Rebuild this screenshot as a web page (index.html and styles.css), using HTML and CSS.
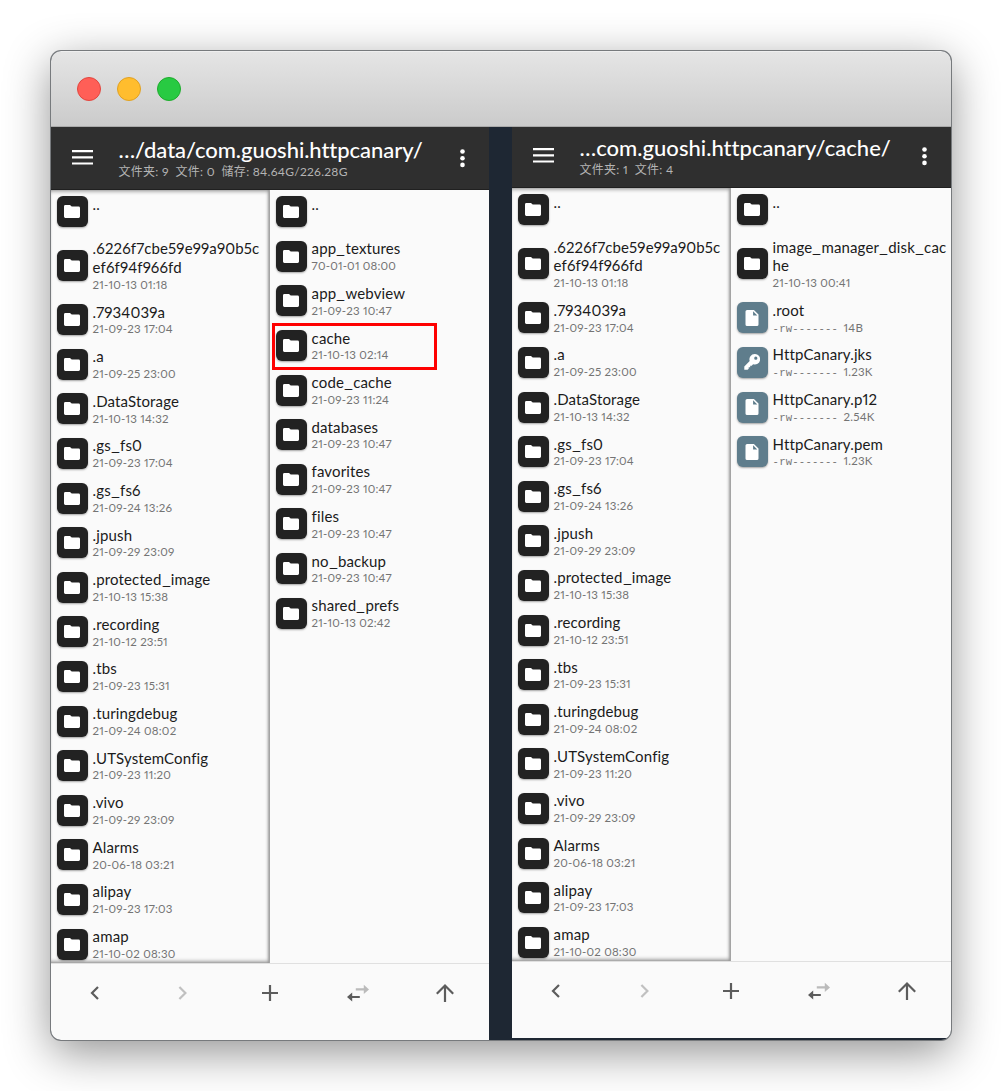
FILE: index.html
```
<!DOCTYPE html>
<html lang="zh-CN">
<head>
<meta charset="utf-8">
<title>MT File Manager</title>
<link rel="stylesheet" href="styles.css">
</head>
<body>
<svg class="defs" aria-hidden="true">
  <symbol id="folder" viewBox="0 0 16 13"><path d="M1.4 0H6l1.7 1.6h6.9A1.4 1.4 0 0 1 16 3v8.6a1.4 1.4 0 0 1-1.4 1.4H1.4A1.4 1.4 0 0 1 0 11.6V1.4A1.4 1.4 0 0 1 1.4 0Z"/></symbol>
  <symbol id="file" viewBox="0 0 13 16"><path fill-rule="evenodd" d="M1.6 0H8.4L13 4.6v9.8a1.6 1.6 0 0 1-1.6 1.6H1.6A1.6 1.6 0 0 1 0 14.4V1.6A1.6 1.6 0 0 1 1.6 0ZM7.6 1.2v4.2h4.2Z"/></symbol>
  <symbol id="key" viewBox="0 0 16 16"><path fill-rule="evenodd" d="M10.7 0a5.3 5.3 0 1 1-1.6 10.3L7.7 11.7H6.2v1.5H4.7v1.5L3.6 15.8H.3V12.6L5.7 7A5.3 5.3 0 0 1 10.7 0ZM11.8 2.6a1.6 1.6 0 1 0 0 3.2 1.6 1.6 0 0 0 0-3.2Z"/></symbol>
  <symbol id="menu" viewBox="0 0 21 15"><path d="M0 0h21v2.2H0zM0 6.2h21v2.2H0zM0 12.4h21v2.2H0z"/></symbol>
  <symbol id="more" viewBox="0 0 5 19"><circle cx="2.5" cy="2.5" r="2.3"/><circle cx="2.5" cy="9.2" r="2.3"/><circle cx="2.5" cy="15.9" r="2.3"/></symbol>
  <symbol id="back" viewBox="0 0 24 24"><path class="line" d="M15 6 9 12l6 6"/></symbol>
  <symbol id="next" viewBox="0 0 24 24"><path class="line" d="M9.4 6l6 6-6 6"/></symbol>
  <symbol id="add" viewBox="0 0 24 24"><path class="line" d="M12 4v16M4 12h16"/></symbol>
  <symbol id="swap" viewBox="0 0 24 24"><path d="M1 16l5.2-4.6v3.5h7.6v2.2H6.2v3.5Z"/><path class="faint" d="M23 8.4l-5.2-4.6v3.5h-8v2.2h8V13Z"/></symbol>
  <symbol id="up" viewBox="0 0 24 24"><path class="line" d="M12 21V4.5M3.8 12.7 12 4.5l8.2 8.2"/></symbol>
</svg>

<main class="window">
  <div class="titlebar"><i class="dot red"></i><i class="dot yellow"></i><i class="dot green"></i></div>
  <div class="screens">

    <section class="phone">
      <header class="bar">
        <svg class="menu"><use href="#menu"/></svg>
        <div class="heading"><h1 class="path">…/data/com.guoshi.httpcanary/</h1><p class="info">文件夹: 9&nbsp; 文件: 0&nbsp; 储存: 84.64G/226.28G</p></div>
        <svg class="more"><use href="#more"/></svg>
      </header>
      <div class="panes">
        <ul class="pane shaded">
          <li class="row"><span class="tile"><svg><use href="#folder"/></svg></span><div class="text"><b>..</b></div></li>
          <li class="row"><span class="tile"><svg><use href="#folder"/></svg></span><div class="text"><b>.6226f7cbe59e99a90b5c<br>ef6f94f966fd</b><small>21-10-13 01:18</small></div></li>
          <li class="row"><span class="tile"><svg><use href="#folder"/></svg></span><div class="text"><b>.7934039a</b><small>21-09-23 17:04</small></div></li>
          <li class="row"><span class="tile"><svg><use href="#folder"/></svg></span><div class="text"><b>.a</b><small>21-09-25 23:00</small></div></li>
          <li class="row"><span class="tile"><svg><use href="#folder"/></svg></span><div class="text"><b>.DataStorage</b><small>21-10-13 14:32</small></div></li>
          <li class="row"><span class="tile"><svg><use href="#folder"/></svg></span><div class="text"><b>.gs<u>_</u>fs0</b><small>21-09-23 17:04</small></div></li>
          <li class="row"><span class="tile"><svg><use href="#folder"/></svg></span><div class="text"><b>.gs<u>_</u>fs6</b><small>21-09-24 13:26</small></div></li>
          <li class="row"><span class="tile"><svg><use href="#folder"/></svg></span><div class="text"><b>.jpush</b><small>21-09-29 23:09</small></div></li>
          <li class="row"><span class="tile"><svg><use href="#folder"/></svg></span><div class="text"><b>.protected<u>_</u>image</b><small>21-10-13 15:38</small></div></li>
          <li class="row"><span class="tile"><svg><use href="#folder"/></svg></span><div class="text"><b>.recording</b><small>21-10-12 23:51</small></div></li>
          <li class="row"><span class="tile"><svg><use href="#folder"/></svg></span><div class="text"><b>.tbs</b><small>21-09-23 15:31</small></div></li>
          <li class="row"><span class="tile"><svg><use href="#folder"/></svg></span><div class="text"><b>.turingdebug</b><small>21-09-24 08:02</small></div></li>
          <li class="row"><span class="tile"><svg><use href="#folder"/></svg></span><div class="text"><b>.UTSystemConfig</b><small>21-09-23 11:20</small></div></li>
          <li class="row"><span class="tile"><svg><use href="#folder"/></svg></span><div class="text"><b>.vivo</b><small>21-09-29 23:09</small></div></li>
          <li class="row"><span class="tile"><svg><use href="#folder"/></svg></span><div class="text"><b>Alarms</b><small>20-06-18 03:21</small></div></li>
          <li class="row"><span class="tile"><svg><use href="#folder"/></svg></span><div class="text"><b>alipay</b><small>21-09-23 17:03</small></div></li>
          <li class="row"><span class="tile"><svg><use href="#folder"/></svg></span><div class="text"><b>amap</b><small>21-10-02 08:30</small></div></li>
        </ul>
        <ul class="pane">
          <li class="row"><span class="tile"><svg><use href="#folder"/></svg></span><div class="text"><b>..</b></div></li>
          <li class="row"><span class="tile"><svg><use href="#folder"/></svg></span><div class="text"><b>app<u>_</u>textures</b><small>70-01-01 08:00</small></div></li>
          <li class="row"><span class="tile"><svg><use href="#folder"/></svg></span><div class="text"><b>app<u>_</u>webview</b><small>21-09-23 10:47</small></div></li>
          <li class="row marked"><span class="tile"><svg><use href="#folder"/></svg></span><div class="text"><b>cache</b><small>21-10-13 02:14</small></div></li>
          <li class="row"><span class="tile"><svg><use href="#folder"/></svg></span><div class="text"><b>code<u>_</u>cache</b><small>21-09-23 11:24</small></div></li>
          <li class="row"><span class="tile"><svg><use href="#folder"/></svg></span><div class="text"><b>databases</b><small>21-09-23 10:47</small></div></li>
          <li class="row"><span class="tile"><svg><use href="#folder"/></svg></span><div class="text"><b>favorites</b><small>21-09-23 10:47</small></div></li>
          <li class="row"><span class="tile"><svg><use href="#folder"/></svg></span><div class="text"><b>files</b><small>21-09-23 10:47</small></div></li>
          <li class="row"><span class="tile"><svg><use href="#folder"/></svg></span><div class="text"><b>no<u>_</u>backup</b><small>21-09-23 10:47</small></div></li>
          <li class="row"><span class="tile"><svg><use href="#folder"/></svg></span><div class="text"><b>shared<u>_</u>prefs</b><small>21-10-13 02:42</small></div></li>
        </ul>
      </div>
      <nav class="tools"><svg><use href="#back"/></svg><svg class="off"><use href="#next"/></svg><svg><use href="#add"/></svg><svg><use href="#swap"/></svg><svg><use href="#up"/></svg></nav>
    </section>

    <section class="phone second">
      <header class="bar">
        <svg class="menu"><use href="#menu"/></svg>
        <div class="heading"><h1 class="path">…com.guoshi.httpcanary/cache/</h1><p class="info">文件夹: 1&nbsp; 文件: 4</p></div>
        <svg class="more"><use href="#more"/></svg>
      </header>
      <div class="panes">
        <ul class="pane shaded">
          <li class="row"><span class="tile"><svg><use href="#folder"/></svg></span><div class="text"><b>..</b></div></li>
          <li class="row"><span class="tile"><svg><use href="#folder"/></svg></span><div class="text"><b>.6226f7cbe59e99a90b5c<br>ef6f94f966fd</b><small>21-10-13 01:18</small></div></li>
          <li class="row"><span class="tile"><svg><use href="#folder"/></svg></span><div class="text"><b>.7934039a</b><small>21-09-23 17:04</small></div></li>
          <li class="row"><span class="tile"><svg><use href="#folder"/></svg></span><div class="text"><b>.a</b><small>21-09-25 23:00</small></div></li>
          <li class="row"><span class="tile"><svg><use href="#folder"/></svg></span><div class="text"><b>.DataStorage</b><small>21-10-13 14:32</small></div></li>
          <li class="row"><span class="tile"><svg><use href="#folder"/></svg></span><div class="text"><b>.gs<u>_</u>fs0</b><small>21-09-23 17:04</small></div></li>
          <li class="row"><span class="tile"><svg><use href="#folder"/></svg></span><div class="text"><b>.gs<u>_</u>fs6</b><small>21-09-24 13:26</small></div></li>
          <li class="row"><span class="tile"><svg><use href="#folder"/></svg></span><div class="text"><b>.jpush</b><small>21-09-29 23:09</small></div></li>
          <li class="row"><span class="tile"><svg><use href="#folder"/></svg></span><div class="text"><b>.protected<u>_</u>image</b><small>21-10-13 15:38</small></div></li>
          <li class="row"><span class="tile"><svg><use href="#folder"/></svg></span><div class="text"><b>.recording</b><small>21-10-12 23:51</small></div></li>
          <li class="row"><span class="tile"><svg><use href="#folder"/></svg></span><div class="text"><b>.tbs</b><small>21-09-23 15:31</small></div></li>
          <li class="row"><span class="tile"><svg><use href="#folder"/></svg></span><div class="text"><b>.turingdebug</b><small>21-09-24 08:02</small></div></li>
          <li class="row"><span class="tile"><svg><use href="#folder"/></svg></span><div class="text"><b>.UTSystemConfig</b><small>21-09-23 11:20</small></div></li>
          <li class="row"><span class="tile"><svg><use href="#folder"/></svg></span><div class="text"><b>.vivo</b><small>21-09-29 23:09</small></div></li>
          <li class="row"><span class="tile"><svg><use href="#folder"/></svg></span><div class="text"><b>Alarms</b><small>20-06-18 03:21</small></div></li>
          <li class="row"><span class="tile"><svg><use href="#folder"/></svg></span><div class="text"><b>alipay</b><small>21-09-23 17:03</small></div></li>
          <li class="row"><span class="tile"><svg><use href="#folder"/></svg></span><div class="text"><b>amap</b><small>21-10-02 08:30</small></div></li>
        </ul>
        <ul class="pane">
          <li class="row"><span class="tile"><svg><use href="#folder"/></svg></span><div class="text"><b>..</b></div></li>
          <li class="row"><span class="tile"><svg><use href="#folder"/></svg></span><div class="text"><b>image<u>_</u>manager<u>_</u>disk<u>_</u>cac<br>he</b><small>21-10-13 00:41</small></div></li>
          <li class="row"><span class="tile blue"><svg><use href="#file"/></svg></span><div class="text"><b>.root</b><small><span class="mode">-rw-------</span>14B</small></div></li>
          <li class="row"><span class="tile blue"><svg><use href="#key"/></svg></span><div class="text"><b>HttpCanary.jks</b><small><span class="mode">-rw-------</span>1.23K</small></div></li>
          <li class="row"><span class="tile blue"><svg><use href="#file"/></svg></span><div class="text"><b>HttpCanary.p12</b><small><span class="mode">-rw-------</span>2.54K</small></div></li>
          <li class="row"><span class="tile blue"><svg><use href="#file"/></svg></span><div class="text"><b>HttpCanary.pem</b><small><span class="mode">-rw-------</span>1.23K</small></div></li>
        </ul>
      </div>
      <nav class="tools"><svg><use href="#back"/></svg><svg class="off"><use href="#next"/></svg><svg><use href="#add"/></svg><svg><use href="#swap"/></svg><svg><use href="#up"/></svg></nav>
    </section>
  </div>
</main>
</body>
</html>
```
FILE: styles.css
```
*, *::after { box-sizing: border-box; margin: 0; padding: 0; }
body { background: #fff; padding: 51px; height: 1091px; overflow: hidden; font-family: Lato, "Noto Sans CJK SC", sans-serif; font-feature-settings: "pnum"; }
.defs { position: absolute; width: 0; height: 0; }
.window { width: 900px; height: 989px; border-radius: 10px; overflow: hidden; display: flex; flex-direction: column; background: #1e2733; box-shadow: 0 0 0 1px #777a7d, 0 12px 46px rgba(0, 0, 0, .44); }
.titlebar { height: 76px; flex: none; display: flex; gap: 16px; padding: 25px 26px; background: linear-gradient(#e5e5e5, #cbcbcb); border-top: 1px solid #efefef; border-bottom: 1px solid #aaa; }
.dot { width: 24px; height: 24px; border-radius: 50%; border: 1px solid #e2463f; background: #ff5f57; }
.dot.yellow { background: #ffbd2e; border-color: #e0a123; }
.dot.green { background: #28ca42; border-color: #1eac2c; }
.screens { flex: 1; min-height: 0; display: grid; grid-template-columns: 438px 439px; gap: 23px; }
.phone { display: flex; flex-direction: column; min-height: 0; background: #fafafa; }
.bar { height: 62.5px; flex: none; display: flex; background: #2f2f2f; color: #fff; border-bottom: 1px solid #202020; padding: 0 24px 0 21px; }
.menu { width: 21px; height: 15px; margin-top: 23px; fill: #fff; }
.heading { flex: 1; margin-left: 25.5px; min-width: 0; white-space: nowrap; }
.path { font-size: 22px; line-height: 28px; font-weight: 500; letter-spacing: -.05px; margin-top: 9px; }
.info { font-size: 12px; line-height: 16px; letter-spacing: .28px; color: #b4b4b4; }
.more { width: 5px; height: 19px; margin-top: 22px; fill: #fff; }
.panes { height: 774.3px; flex: none; display: grid; grid-template-columns: 219px 1fr; border-bottom: 1px solid #e0e0e0; }
.pane { list-style: none; min-width: 0; overflow: hidden; padding-left: 5.6px; }
.shaded { box-shadow: inset -3px 0 3px -2px #999, inset 0 4px 4px -3px #888, inset 0 -4px 4px -3px #777; border-right: 1px solid #a4a4a4; }
.row { min-height: 44.6px; display: flex; align-items: center; position: relative; }
.tile { width: 31px; height: 31px; flex: none; display: grid; place-items: center; border-radius: 6px; background: #222; box-shadow: 0 1px 2px rgba(0, 0, 0, .35); }
.tile svg { width: 16px; height: 13px; fill: #fff; }
.tile.blue { background: #5f7d8c; }
.tile.blue svg { width: 16px; height: 16px; }
.text { align-self: flex-start; margin-left: 5px; padding: 5.3px 0; white-space: nowrap; }
.text b { display: block; font-size: 15px; line-height: 18.7px; font-weight: 400; letter-spacing: .13px; color: #1b1b1b; }
.text u { text-decoration: none; display: inline-block; transform: scaleX(1.3); margin: 0 1.1px; }
.text small { display: block; font-size: 11.5px; line-height: 15.3px; letter-spacing: .2px; color: #747474; }
.mode { display: inline-block; width: 71px; font-family: "Liberation Mono", monospace; font-size: 10.6px; line-height: 12px; white-space: pre; }
.marked::after { content: ""; position: absolute; left: -4px; top: 0; width: 165px; height: 47px; border: 3px solid #fe0000; }
.tools { display: grid; grid-template-columns: repeat(5, 1fr); justify-items: center; padding-top: 17px; }
.tools svg { width: 24px; height: 24px; fill: #5c5c5c; stroke: #5c5c5c; stroke-width: 0; }
.tools .off { opacity: .36; }
.line { fill: none; stroke-width: 2.2; }
.faint { opacity: .4; }
.second { margin-bottom: 2px; }
.second .bar { height: 60.7px; }
.second .menu { margin-top: 21px; }
.second .path { margin-top: 7.3px; letter-spacing: .03px; }
.second .more { margin-top: 20px; }
```
